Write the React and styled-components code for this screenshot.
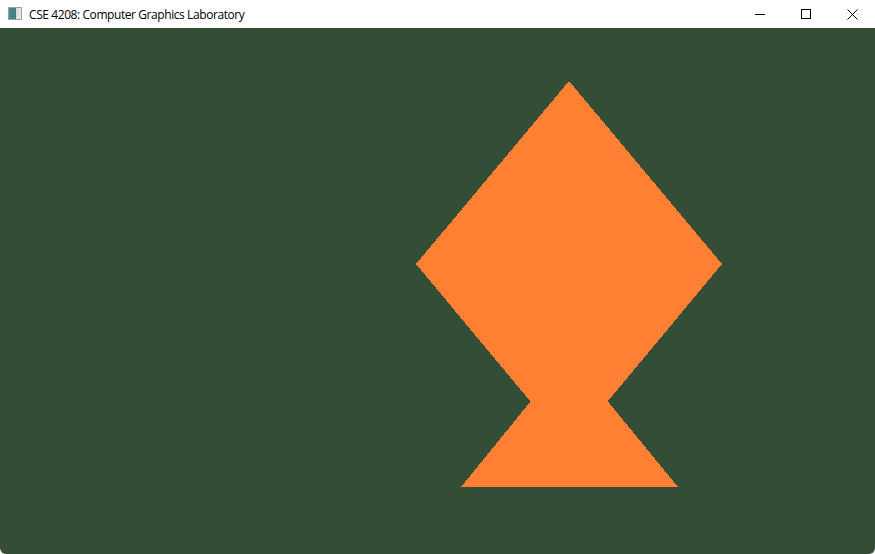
import styled, { createGlobalStyle } from "styled-components";

const GlobalStyle = createGlobalStyle`
  html, body {
    margin: 0;
    padding: 0;
    background: #ffffff;
    overflow: hidden;
  }
`;

const Window = styled.div`
  width: 875px;
  height: 554px;
  display: flex;
  flex-direction: column;
  background: #334d36;
  border-bottom-left-radius: 6px;
  border-bottom-right-radius: 6px;
  overflow: hidden;
`;

const TitleBar = styled.div`
  height: 28px;
  flex: 0 0 28px;
  background: #ffffff;
  display: flex;
  align-items: center;
`;

const AppIcon = styled.div`
  width: 14px;
  height: 13px;
  margin: 0 7px 1px 8px;
  box-sizing: border-box;
  border: 1px solid #9aa0a6;
  background: linear-gradient(90deg, #4d8a73 0%, #3f7d8f 60%, #d9dde2 61%, #e6e9ec 100%);
`;

const Title = styled.span`
  font-family: "Open Sans", "Noto Sans", sans-serif;
  font-size: 12px;
  color: #000000;
  flex: 1;
  letter-spacing: -0.42px;
`;

const Controls = styled.div`
  display: flex;
  height: 100%;
`;

const ControlButton = styled.div`
  width: 46px;
  height: 100%;
  display: flex;
  align-items: center;
  justify-content: center;
`;

const Viewport = styled.div`
  flex: 1;
  position: relative;
`;

const Scene = styled.svg`
  display: block;
  width: 875px;
  height: 526px;
`;

const ORANGE = "#ff8033";

export default function App() {
  // window area starts at y=28; coordinates below are relative to it
  const oy = 28;
  const diamond = [
    [569, 81],
    [722, 264],
    [569, 448],
    [416, 264],
  ];
  const triangle = [
    [569, 354],
    [678, 487],
    [461, 487],
  ];
  const pts = (arr) => arr.map(([x, y]) => `${x},${y - oy}`).join(" ");

  return (
    <>
      <GlobalStyle />
      <Window>
        <TitleBar>
          <AppIcon />
          <Title>CSE 4208: Computer Graphics Laboratory</Title>
          <Controls>
            <ControlButton>
              <svg width="10" height="10" viewBox="0 0 10 10">
                <path d="M0 5.5h10" stroke="#000" strokeWidth="1" />
              </svg>
            </ControlButton>
            <ControlButton>
              <svg width="10" height="10" viewBox="0 0 10 10">
                <rect x="0.5" y="0.5" width="9" height="9" fill="none" stroke="#000" strokeWidth="1" />
              </svg>
            </ControlButton>
            <ControlButton>
              <svg width="11" height="11" viewBox="0 0 11 11">
                <path d="M0.5 0.5l10 10M10.5 0.5l-10 10" stroke="#000" strokeWidth="1" />
              </svg>
            </ControlButton>
          </Controls>
        </TitleBar>
        <Viewport>
          <Scene viewBox="0 0 875 526" shapeRendering="crispEdges">
            <polygon points={pts(diamond)} fill={ORANGE} />
            <polygon points={pts(triangle)} fill={ORANGE} />
          </Scene>
        </Viewport>
      </Window>
    </>
  );
}
